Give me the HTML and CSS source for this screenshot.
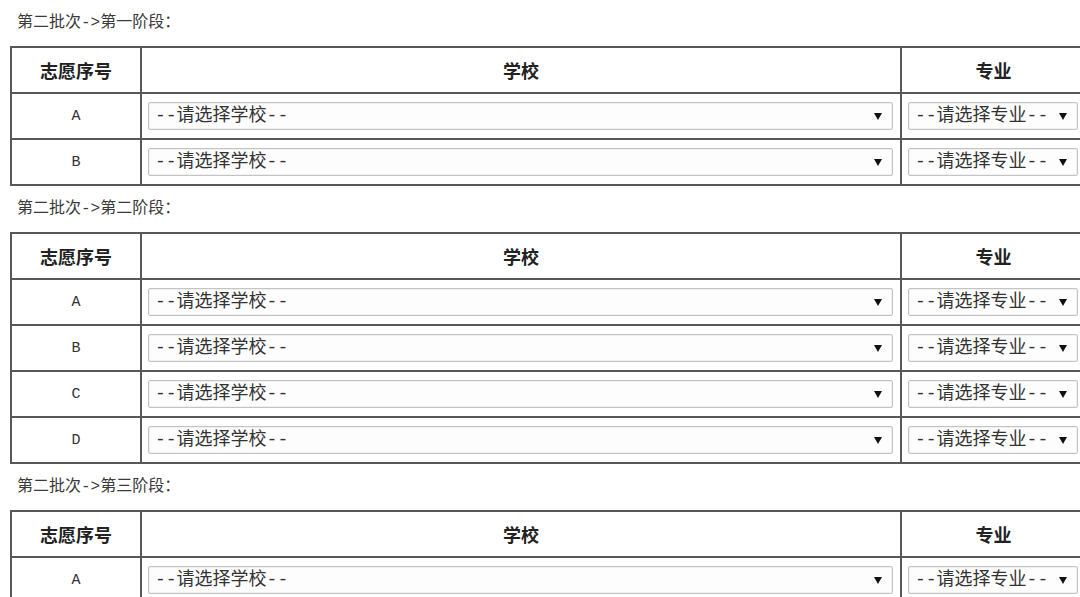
FILE: index.html
```html
<!DOCTYPE html>
<html lang="zh-CN">
<head>
<meta charset="utf-8">
<title>志愿填报</title>
<link rel="stylesheet" href="styles.css">
</head>
<body>
<div class="page">
  <div class="stage-title">第二批次-&gt;第一阶段：</div>
  <table class="choice-table">
    <colgroup><col class="c-no"><col class="c-school"><col class="c-major"></colgroup>
    <thead><tr><th>志愿序号</th><th>学校</th><th>专业</th></tr></thead>
    <tbody>
      <tr><td class="no">A</td><td><span class="sel sel-school"><select><option>--请选择学校--</option></select></span></td><td><span class="sel sel-major"><select><option>--请选择专业--</option></select></span></td></tr>
      <tr><td class="no">B</td><td><span class="sel sel-school"><select><option>--请选择学校--</option></select></span></td><td><span class="sel sel-major"><select><option>--请选择专业--</option></select></span></td></tr>
    </tbody>
  </table>

  <div class="stage-title">第二批次-&gt;第二阶段：</div>
  <table class="choice-table">
    <colgroup><col class="c-no"><col class="c-school"><col class="c-major"></colgroup>
    <thead><tr><th>志愿序号</th><th>学校</th><th>专业</th></tr></thead>
    <tbody>
      <tr><td class="no">A</td><td><span class="sel sel-school"><select><option>--请选择学校--</option></select></span></td><td><span class="sel sel-major"><select><option>--请选择专业--</option></select></span></td></tr>
      <tr><td class="no">B</td><td><span class="sel sel-school"><select><option>--请选择学校--</option></select></span></td><td><span class="sel sel-major"><select><option>--请选择专业--</option></select></span></td></tr>
      <tr><td class="no">C</td><td><span class="sel sel-school"><select><option>--请选择学校--</option></select></span></td><td><span class="sel sel-major"><select><option>--请选择专业--</option></select></span></td></tr>
      <tr><td class="no">D</td><td><span class="sel sel-school"><select><option>--请选择学校--</option></select></span></td><td><span class="sel sel-major"><select><option>--请选择专业--</option></select></span></td></tr>
    </tbody>
  </table>

  <div class="stage-title">第二批次-&gt;第三阶段：</div>
  <table class="choice-table">
    <colgroup><col class="c-no"><col class="c-school"><col class="c-major"></colgroup>
    <thead><tr><th>志愿序号</th><th>学校</th><th>专业</th></tr></thead>
    <tbody>
      <tr><td class="no">A</td><td><span class="sel sel-school"><select><option>--请选择学校--</option></select></span></td><td><span class="sel sel-major"><select><option>--请选择专业--</option></select></span></td></tr>
      <tr><td class="no">B</td><td><span class="sel sel-school"><select><option>--请选择学校--</option></select></span></td><td><span class="sel sel-major"><select><option>--请选择专业--</option></select></span></td></tr>
    </tbody>
  </table>
</div>
</body>
</html>
```
FILE: styles.css
```css
html, body {
  margin: 0;
  padding: 0;
  overflow: hidden;
  background: #ffffff;
}

.page {
  padding-left: 10px;
  font-family: "Liberation Mono", "Noto Sans CJK SC", monospace;
  color: #333333;
}

.stage-title {
  height: 46px;
  line-height: 46px;
  padding-left: 7px;
  font-size: 16px;
  color: #3a3a3a;
  white-space: nowrap;
}

.choice-table {
  border-collapse: separate;
  border-spacing: 0;
  table-layout: fixed;
  width: 1077px;
  border-left: 2px solid #585858;
  border-top: 2px solid #585858;
}

.c-no { width: 130px; }
.c-school { width: 760px; }
.c-major { width: 185px; }

.choice-table th,
.choice-table td {
  box-sizing: border-box;
  height: 46px;
  padding: 0;
  border-right: 2px solid #585858;
  border-bottom: 2px solid #585858;
  vertical-align: middle;
}

.choice-table th {
  font-size: 18px;
  font-weight: bold;
  color: #222222;
  text-align: center;
}

.choice-table td.no {
  text-align: center;
  font-size: 15px;
  color: #333333;
}

.choice-table td {
  padding-left: 6px;
}

.choice-table td.no {
  padding-left: 0;
}

.sel {
  position: relative;
  display: block;
  height: 28px;
}

.sel-school { width: 745px; }
.sel-major { width: 170px; }

.sel select {
  -webkit-appearance: none;
  appearance: none;
  box-sizing: border-box;
  width: 100%;
  height: 28px;
  margin: 0;
  padding: 0 0 0 6px;
  border: 1px solid #c4c4c4;
  border-radius: 2px;
  background: #fdfdfd;
  box-shadow: inset 0 0 0 1px #f0f0f0;
  font-family: "Liberation Mono", "Noto Sans CJK SC", monospace;
  font-size: 18px;
  line-height: 26px;
  color: #333333;
  outline: none;
}

.sel::after {
  content: "";
  position: absolute;
  top: 11px;
  right: 11px;
  width: 0;
  height: 0;
  border-left: 4px solid transparent;
  border-right: 4px solid transparent;
  border-top: 7px solid #111111;
  pointer-events: none;
}
```
